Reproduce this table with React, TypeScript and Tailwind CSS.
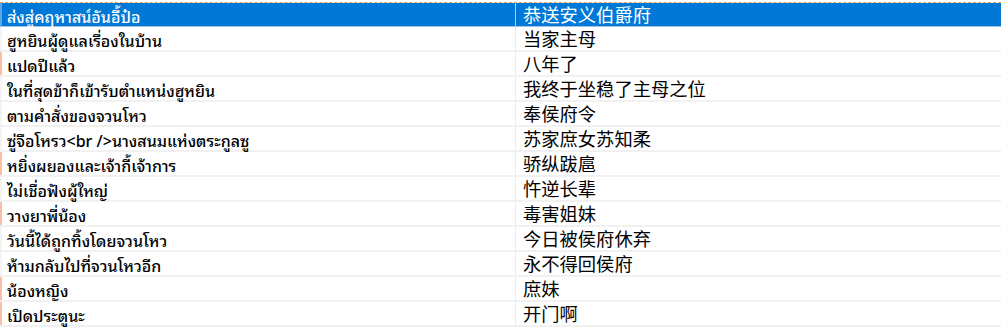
import React from "react";

const rows: { th: string; zh: string; mark?: boolean }[] = [
  { th: "ฮูหยินผู้ดูแลเรื่องในบ้าน", zh: "当家主母" },
  { th: "แปดปีแล้ว", zh: "八年了", mark: true },
  { th: "ในที่สุดข้าก็เข้ารับตำแหน่งฮูหยิน", zh: "我终于坐稳了主母之位" },
  { th: "ตามคำสั่งของจวนโหว", zh: "奉侯府令" },
  { th: "ซู่จือโหรว<br />นางสนมแห่งตระกูลซู", zh: "苏家庶女苏知柔" },
  { th: "หยิ่งผยองและเจ้ากี้เจ้าการ", zh: "骄纵跋扈", mark: true },
  { th: "ไม่เชื่อฟังผู้ใหญ่", zh: "忤逆长辈" },
  { th: "วางยาพี่น้อง", zh: "毒害姐妹", mark: true },
  { th: "วันนี้ได้ถูกทิ้งโดยจวนโหว", zh: "今日被侯府休弃" },
  { th: "ห้ามกลับไปที่จวนโหวอีก", zh: "永不得回侯府" },
  { th: "น้องหญิง", zh: "庶妹", mark: true },
  { th: "เปิดประตูนะ", zh: "开门啊", mark: true },
];

const thai =
  "font-['Tahoma','Noto_Sans_Thai_Looped','Garuda','Loma','Noto_Sans_Thai','Noto_Sans',sans-serif] text-[16px] font-medium leading-none pt-[2px]";
const zh = "font-['Noto_Sans_CJK_SC',sans-serif] text-[18.3px] leading-none";

export default function App() {
  return (
    <div className="w-[1001px] h-[327px] overflow-hidden bg-white pt-[2px]">
      <div className="border-t border-dashed border-[#e8a25a]">
        <div className="grid grid-cols-[515px_1fr] h-[24px] bg-[#0078d7] border-b border-[#9cc8ee] text-white">
          <div className={`flex items-center pl-[5px] border-l-2 border-[#5aa6e6] ${thai}`}>ส่งสู่คฤหาสน์อันอี้ป๋อ</div>
          <div className={`flex items-center pl-[7px] border-l border-[#a9d0f0] ${zh}`}>恭送安义伯爵府</div>
        </div>
        {rows.map((r, i) => (
          <div key={i} className="grid grid-cols-[515px_1fr] h-[25px] border-b-2 border-[#f1f1f1] text-black">
            <div
              className={`flex items-center pl-[5px] border-l-2 ${r.mark ? "border-[#f8bea6]" : "border-[#f4f4f4]"} ${thai}`}
            >
              {r.th}
            </div>
            <div className={`flex items-center pl-[7px] border-l border-[#ececec] ${zh}`}>{r.zh}</div>
          </div>
        ))}
      </div>
    </div>
  );
}
